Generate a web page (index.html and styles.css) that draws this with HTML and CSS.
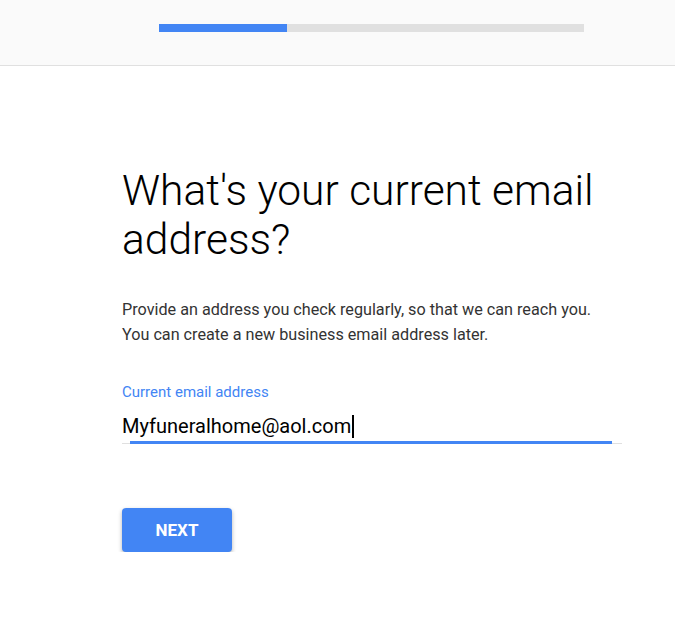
FILE: index.html
```html
<!DOCTYPE html>
<html lang="en">
<head>
<meta charset="utf-8">
<title>Current email address</title>
<link rel="stylesheet" href="styles.css">
</head>
<body>
<header class="topbar">
  <div class="progress"><div class="progress-fill"></div></div>
</header>
<main class="content">
  <h1 class="title">What's your current email address?</h1>
  <p class="lead">Provide an address you check regularly, so that we can reach you. You can create a new business email address later.</p>
  <div class="field">
    <label class="field-label">Current email address</label>
    <div class="field-value">Myfuneralhome@aol.com<span class="caret"></span></div>
    <div class="field-line"><div class="field-line-active"></div></div>
  </div>
  <button class="next-btn" type="button">NEXT</button>
</main>
</body>
</html>
```

FILE: styles.css
```css
html, body {
  margin: 0;
  padding: 0;
  background: #ffffff;
}
body {
  font-family: Roboto, "Liberation Sans", Arial, sans-serif;
  color: #000;
}
.topbar {
  background: #fafafa;
  border-bottom: 1px solid #e0e0e0;
  padding-top: 24px;
  box-sizing: border-box;
  height: 66px;
}
.progress {
  margin-left: 159px;
  width: 425px;
  height: 8px;
  background: #e0e0e0;
}
.progress-fill {
  width: 128px;
  height: 100%;
  background: #4285f4;
}
.content {
  padding-left: 122px;
  width: 500px;
  padding-top: 100px;
}
.title {
  margin: 0;
  font-weight: 300;
  font-size: 42.5px;
  line-height: 49px;
  color: #000;
}
.lead {
  margin: 33px 0 0;
  max-width: 482px;
  font-size: 16.2px;
  line-height: 25px;
  color: #333;
}
.field {
  margin-top: 35px;
}
.field-label {
  display: block;
  font-size: 15px;
  line-height: 20px;
  color: #4285f4;
}
.field-value {
  margin-top: 10px;
  font-size: 20px;
  line-height: 28px;
  color: #000;
  display: flex;
  align-items: center;
}
.caret {
  display: inline-block;
  width: 1.5px;
  height: 23px;
  background: #000;
  margin-left: 1px;
}
.field-line {
  margin-top: 3px;
  height: 1px;
  background: #e0e0e0;
  position: relative;
}
.field-line-active {
  position: absolute;
  left: 8px;
  right: 10px;
  top: -2px;
  height: 3px;
  background: #4285f4;
}
.next-btn {
  display: block;
  margin-top: 64px;
  width: 110px;
  height: 44px;
  border: none;
  border-radius: 4px;
  background: #4285f4;
  color: #fff;
  font-family: Roboto, "Liberation Sans", Arial, sans-serif;
  font-weight: 700;
  font-size: 17px;
  box-shadow: 0 2px 4px rgba(0,0,0,0.3);
  padding: 0;
  cursor: pointer;
}
```
